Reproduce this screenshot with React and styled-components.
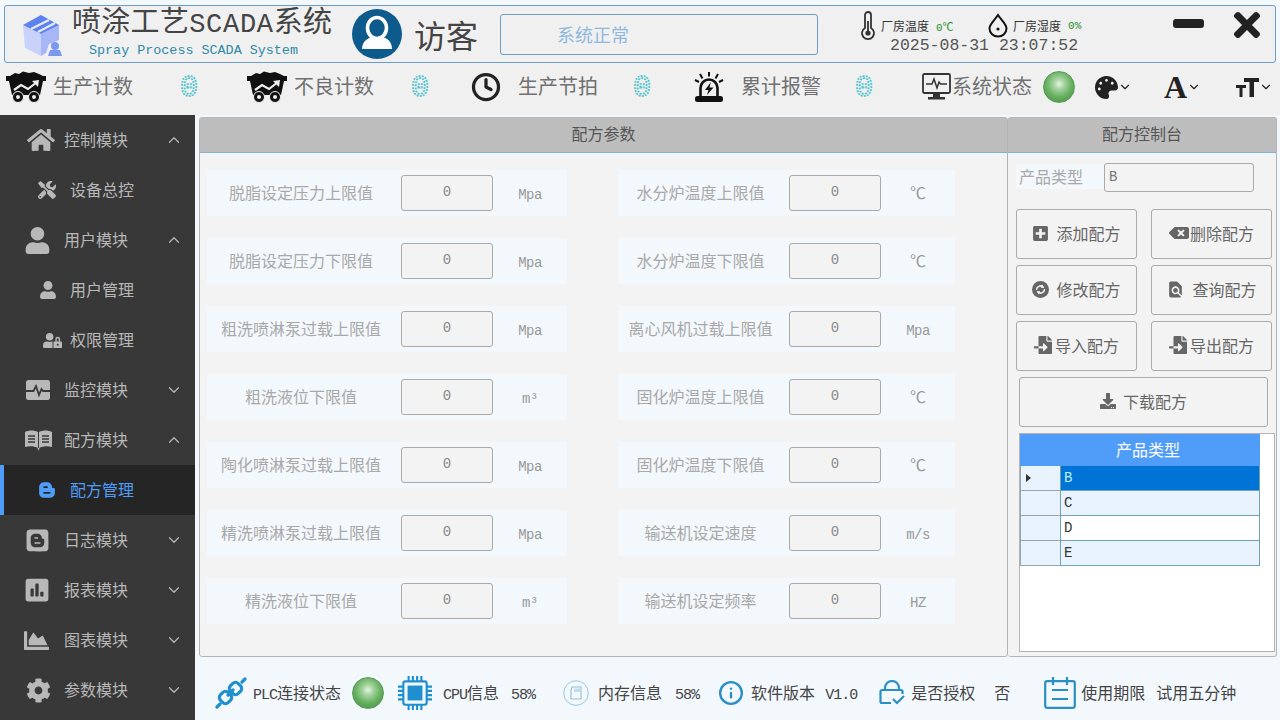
import React from 'react';
import styled, { createGlobalStyle } from 'styled-components';
import {
  FaHome, FaTools, FaUser, FaUserLock, FaBloggerB, FaBlogger, FaPoll, FaChartArea, FaCog,
  FaPalette, FaPlusSquare, FaBackspace, FaFileImport, FaDownload, FaTimes,
} from 'react-icons/fa';
import { MdFindInPage } from 'react-icons/md';
import { FiClock, FiInfo } from 'react-icons/fi';
import { ChevronDown, ChevronUp } from 'lucide-react';

const FONT = `"Liberation Mono", "Noto Sans CJK SC", monospace`;

const GlobalStyle = createGlobalStyle`
  html, body { margin: 0; padding: 0; }
  body { font-family: ${FONT}; background: #f0f0f0; overflow: hidden; }
  * { box-sizing: border-box; }
`;

const CartIcon = () => (
  <svg width="42" height="32" viewBox="0 0 42 32">
    <path d="M5 5 L10 2 L14 3 L18 0.5 L24 2 L29 1 L34 3 L38 5 Z" fill="#111" />
    <path d="M1 5 H41 V10 H38 L35 24 H7 L4 10 H1 Z" fill="#111" />
    <path d="M9 19 L16 14 L23 18 L32 11" fill="none" stroke="#f0f0f0" strokeWidth="2.2" />
    <path d="M27 10 L34 9 L33 16 Z" fill="#f0f0f0" />
    <circle cx="13" cy="26" r="5.5" fill="#111" stroke="#f0f0f0" strokeWidth="1" />
    <circle cx="29" cy="26" r="5.5" fill="#111" stroke="#f0f0f0" strokeWidth="1" />
    <circle cx="13" cy="26" r="2" fill="#f0f0f0" />
    <circle cx="29" cy="26" r="2" fill="#f0f0f0" />
  </svg>
);

const AlarmIcon = () => (
  <svg width="30" height="32" viewBox="0 0 30 32">
    <path d="M6.5 25 V17 a8.5 8.5 0 0 1 17 0 V25" fill="none" stroke="#111" strokeWidth="2.6" />
    <path d="M17 11 L11 19 H14.5 L13 24 L19.5 16.5 H15.5 Z" fill="#111" />
    <rect x="1" y="25" width="28" height="6" rx="2.5" fill="#111" />
    <path d="M15 1 V5.5 M6 3 L8.5 7.5 M24 3 L21.5 7.5 M1 9 L5 11 M29 9 L25 11" stroke="#111" strokeWidth="2" />
  </svg>
);

const MonitorIcon = () => (
  <svg width="30" height="28" viewBox="0 0 30 28">
    <rect x="1" y="1" width="27" height="19" rx="1.5" fill="none" stroke="#333" strokeWidth="1.8" />
    <path d="M4 11 H10 L12 6 L15 15 L17 9 L18.5 11 H25" fill="none" stroke="#333" strokeWidth="1.5" />
    <rect x="11" y="20" width="7" height="4" fill="#333" />
    <rect x="6" y="24" width="17" height="2.5" fill="#333" />
  </svg>
);

const LogoIcon = () => (
  <svg width="46" height="46" viewBox="0 0 46 46">
    <path d="M4 13 L22 22 V44 L6 36 Z" fill="#c9d2fb" />
    <path d="M22 22 L40 13 V28 L30 32 L27 41 L22 44 Z" fill="#a7b6f7" />
    <path d="M4 13 L22 3 L40 13 L22 22 Z" fill="#5f83ee" />
    <path d="M12 17 L30 8 M19 20 L36 11" stroke="#e8ecfd" strokeWidth="2" />
    <circle cx="36" cy="34" r="4" fill="#7b98ee" />
    <path d="M29 44 L31 38 H41 L43 44 Z" fill="#7b98ee" />
  </svg>
);

const AvatarIcon = () => (
  <svg width="50" height="50" viewBox="0 0 50 50">
    <circle cx="25" cy="25" r="25" fill="#0d5a8c" />
    <ellipse cx="25" cy="19" rx="9.5" ry="10.5" fill="none" stroke="#fff" strokeWidth="3.6" />
    <path d="M10 40 C10 32 16 29 20 28 C23 31 27 31 30 28 C35 29 40 32 40 40 Z" fill="#fff" />
  </svg>
);

const ThermoIcon = () => (
  <svg width="16" height="30" viewBox="0 0 16 30">
    <path d="M5 4 a3 3 0 0 1 6 0 V17 a6 6 0 1 1 -6 0 Z" fill="none" stroke="#333" strokeWidth="1.8" />
    <path d="M8 10 V21" stroke="#333" strokeWidth="1.8" />
    <circle cx="8" cy="22" r="2.6" fill="#333" />
  </svg>
);

const DropIcon = () => (
  <svg width="20" height="25" viewBox="0 0 20 25">
    <path d="M10 2 C14 8 18.5 11 18.5 15.5 a8.5 8 0 0 1 -17 0 C1.5 11 6 8 10 2 Z" fill="none" stroke="#111" strokeWidth="2" />
    <circle cx="10" cy="16" r="1.6" fill="#111" />
  </svg>
);

const PlugIcon = () => (
  <svg width="32" height="32" viewBox="0 0 32 32">
    <g fill="none" stroke="#1f8fd0" strokeWidth="3.2" strokeLinecap="round">
      <rect x="15" y="6" width="11" height="11" rx="4" transform="rotate(45 20.5 11.5)" />
      <rect x="5" y="15" width="11" height="11" rx="4" transform="rotate(45 10.5 20.5)" />
      <path d="M13 18 L18 13 M2 30 L5 27 M27 5 L30 2" />
    </g>
  </svg>
);

const ChipIcon = () => (
  <svg width="34" height="34" viewBox="0 0 32 32">
    <rect x="5" y="5" width="22" height="22" rx="2" fill="none" stroke="#1f8fd0" strokeWidth="2" />
    <rect x="9" y="9" width="14" height="14" fill="#1f8fd0" />
    <path d="M10 0 V5 M14 0 V5 M18 0 V5 M22 0 V5 M10 27 V32 M14 27 V32 M18 27 V32 M22 27 V32 M0 10 H5 M0 14 H5 M0 18 H5 M0 22 H5 M27 10 H32 M27 14 H32 M27 18 H32 M27 22 H32" stroke="#1f8fd0" strokeWidth="2" />
  </svg>
);

const MemoryIcon = () => (
  <svg width="26" height="26" viewBox="0 0 26 26">
    <circle cx="13" cy="13" r="12.3" fill="none" stroke="#8fc0d8" strokeWidth="0.9" />
    <path d="M9 7 H18 V19 H8 V10 Z" fill="none" stroke="#8fc0d8" strokeWidth="1.1" />
    <path d="M12 8.5 V12 M14 8.5 V12 M16 8.5 V12" stroke="#8fc0d8" strokeWidth="1" />
  </svg>
);

const LockCheckIcon = () => (
  <svg width="26" height="26" viewBox="0 0 26 26">
    <g fill="none" stroke="#2a8fc4" strokeWidth="2.2">
      <path d="M6 10 V8 a7 7 0 0 1 14 0 V10" />
      <path d="M12 23 H3 a1.5 1.5 0 0 1 -1.5 -1.5 V11.5 a1.5 1.5 0 0 1 1.5 -1.5 H22 a1.5 1.5 0 0 1 1.5 1.5 V14" />
      <path d="M14 19 L18 23 L25 16" />
    </g>
  </svg>
);

const CalendarIcon = () => (
  <svg width="32" height="32" viewBox="0 0 32 32">
    <g fill="none" stroke="#2a8fc4" strokeWidth="2.2">
      <rect x="1.2" y="4.2" width="29.6" height="26.6" rx="2" />
      <path d="M9 0 V8 M23 0 V8 M8 13 H24 M8 22 H24" />
    </g>
  </svg>
);

const SyncIcon = () => (
  <svg width="17" height="17" viewBox="0 0 17 17">
    <circle cx="8.5" cy="8.5" r="8.5" fill="#666" />
    <g fill="none" stroke="#f3f3f3" strokeWidth="1.5">
      <path d="M4.5 9 a4 4 0 0 1 6.5 -3.2" />
      <path d="M12.5 8 a4 4 0 0 1 -6.5 3.2" />
    </g>
    <path d="M10 3.5 L12.5 6.8 L9 7 Z M7 13.5 L4.5 10.2 L8 10 Z" fill="#f3f3f3" />
  </svg>
);

const PulseCardIcon = () => (
  <svg width="24" height="20" viewBox="0 0 24 20">
    <rect width="24" height="20" rx="2.5" fill="currentColor" />
    <path d="M0 11 H7.5 L10 6 L13 15 L15.5 9 L17 11 H24" fill="none" stroke="#383838" strokeWidth="1.8" />
  </svg>
);

const RecipeBookIcon = () => (
  <svg width="27" height="21" viewBox="0 0 27 21">
    <path d="M0 2 C4 0 9 0 13 2 V18 C9 16 4 16 0 17 Z M14 2 C18 0 23 0 27 2 V17 C23 16 18 16 14 18 Z" fill="currentColor" />
    <path d="M12.5 18 H14.5 L13.5 21 Z" fill="currentColor" />
    <path d="M3 6 H10 M3 9 H10 M3 12 H10 M17 6 H24 M17 9 H24 M17 12 H24" stroke="#383838" strokeWidth="1.5" />
  </svg>
);

const TextSizeIcon = () => (
  <svg width="23" height="21" viewBox="0 0 23 21">
    <path d="M0 8 H10 V11 H6.5 V20 H3.5 V11 H0 Z M8 1 H23 V5 H18 V20 H13.5 V5 H8 Z" fill="#222" />
  </svg>
);

const DotDigit = () => (
  <svg width="22" height="36" viewBox="0 0 22 36">
    <text
      x="11"
      y="27"
      textAnchor="middle"
      fontSize="30"
      fontFamily={FONT}
      fill="none"
      stroke="#49c3cf"
      strokeWidth="1.7"
      strokeDasharray="1.8 1.3"
    >
      0
    </text>
  </svg>
);

const Page = styled.div`
  width: 1280px;
  height: 720px;
  display: flex;
  flex-direction: column;
  background: #f0f0f0;
  color: #555;
  overflow: hidden;
`;

const Top = styled.div`
  padding: 5px 4px 0;
  background: #f3f8fd;
  height: 63px;
`;

const TitleBar = styled.header`
  height: 58px;
  display: flex;
  align-items: center;
  border: 1px solid #6d9cc4;
  border-radius: 3px;
  background: #f0f0f0;
`;

const LogoSlot = styled.div`
  width: 67px;
  padding: 2px 0 0 14px;
  display: flex;
`;

const TitleBlock = styled.div`
  width: 280px;
  display: flex;
  flex-direction: column;
`;

const AppName = styled.div`
  font-size: 29px;
  line-height: 34px;
  color: #444;
  letter-spacing: 0.3px;
  margin-top: -1px;
  white-space: nowrap;
  & > span { font-size: 27px; letter-spacing: 0.7px; }
`;

const AppSub = styled.div`
  font-size: 13.4px;
  line-height: 18px;
  color: #2d8aa6;
  padding-left: 17px;
  white-space: nowrap;
`;

const Visitor = styled.div`
  font-size: 32px;
  color: #444;
  margin-left: 12px;
  width: 86px;
`;

const StatusBox = styled.div`
  width: 318px;
  height: 41px;
  border: 1px solid #6d9cc4;
  border-radius: 3px;
  margin-top: 1px;
  display: flex;
  align-items: center;
  padding: 0 0 2px 56px;
  font-size: 18px;
  color: #8db8de;
`;

const EnvBlock = styled.div`
  margin-left: 42px;
  display: flex;
  flex-direction: column;
  padding-top: 1px;
`;

const EnvRow = styled.div`
  display: flex;
  align-items: center;
  height: 26px;
  margin-top: -1px;
`;

const EnvLabel = styled.span`
  font-size: 12px;
  color: #333;
  margin-left: 5px;
  white-space: nowrap;
`;

const EnvValue = styled.span`
  font-size: 11px;
  color: #1d8f1d;
  margin-left: 7px;
  width: ${p => p.$w}px;
  white-space: nowrap;
`;

const Clock = styled.div`
  font-size: 16.5px;
  line-height: 20px;
  color: #555;
  padding-left: 30px;
  white-space: nowrap;
  margin-top: -3px;
`;

const WindowButtons = styled.div`
  margin-left: auto;
  display: flex;
  align-items: center;
  gap: 24px;
  padding: 0 9px 18px 0;
  height: 100%;
`;

const MinBar = styled.div`
  width: 31px;
  height: 9px;
  border-radius: 3px;
  background: #222;
  margin-bottom: 3px;
`;

const StatsBar = styled.div`
  height: 52px;
  display: flex;
  align-items: center;
  padding-bottom: 4px;
  background: #f0f0f0;
`;

const Stat = styled.div`
  width: ${p => p.$w}px;
  padding-left: ${p => p.$pl}px;
  display: flex;
  align-items: center;
  flex: none;
`;

const StatLabel = styled.span`
  font-size: 20px;
  color: #707070;
  margin: 0 0 4px ${p => p.$ml}px;
  white-space: nowrap;
`;

const Digit = styled.div`
  margin-left: ${p => p.$ml}px;
  display: flex;
`;

const Led = styled.div`
  width: ${p => p.$size}px;
  height: ${p => p.$size}px;
  margin-left: ${p => p.$ml}px;
  border-radius: 50%;
  flex: none;
  background: radial-gradient(circle at 50% 40%, #e6f3e4 0%, #a7d4a2 22%, #66b060 55%, #3e8f3c 100%);
  border: 1px solid #5b9a58;
`;

const ToolGroup = styled.div`
  margin-left: ${p => p.$ml}px;
  display: flex;
  align-items: center;
  color: #222;
`;

const SerifA = styled.span`
  font-family: "Liberation Serif", serif;
  font-weight: 700;
  font-size: 32px;
  line-height: 32px;
  color: #222;
`;

const Main = styled.div`
  flex: 1;
  display: flex;
  min-height: 0;
`;

const Sidebar = styled.nav`
  width: 195px;
  background: #383838;
  flex: none;
`;

const NavRow = styled.div`
  height: 50px;
  display: flex;
  align-items: center;
  position: relative;
  color: ${p => (p.$active ? '#4f9df8' : '#b8b8b8')};
  background: ${p => (p.$active ? '#252525' : 'transparent')};
  border-left: ${p => (p.$active ? '4px solid #4f9df8' : '0 solid transparent')};
  padding-left: ${p => (p.$active ? 0 : 4)}px;
`;

const NavIcon = styled.div`
  width: ${p => (p.$sub ? 66 : 60)}px;
  display: flex;
  justify-content: center;
  padding-left: ${p => (p.$sub ? 20 : 8) + (p.$dx ?? 0) * 2}px;
  flex: none;
`;

const NavText = styled.span`
  font-size: 16px;
  white-space: nowrap;
  padding-bottom: 2px;
`;

const NavChevron = styled.div`
  position: absolute;
  right: 12px;
  top: 16px;
  display: flex;
`;

const Content = styled.div`
  flex: 1;
  display: flex;
  flex-direction: column;
  background: #f3f8fd;
  min-width: 0;
`;

const Panels = styled.div`
  height: 543px;
  padding: 2px 0 0 4px;
  display: flex;
`;

const Panel = styled.section`
  width: ${p => p.$w}px;
  height: 540px;
  border: 1px solid #b4b4b4;
  border-left-width: ${p => (p.$noLeft ? 0 : 1)}px;
  border-radius: 3px;
  background: #f3f3f3;
  display: flex;
  flex-direction: column;
`;

const PanelHead = styled.div`
  height: 35px;
  flex: none;
  background: #bdbdbd;
  border-bottom: 1px solid #7fb3d3;
  color: #555;
  font-size: 16px;
  display: flex;
  align-items: center;
  justify-content: center;
  padding-bottom: 4px;
`;

const FormGrid = styled.div`
  display: grid;
  grid-template-columns: 360px 337px;
  column-gap: 51px;
  row-gap: 22px;
  padding: 17px 0 0 7px;
`;

const FieldRow = styled.div`
  height: 46px;
  background: #f3f8fd;
  display: flex;
  align-items: center;
`;

const FieldLabel = styled.div`
  width: ${p => p.$w}px;
  text-align: center;
  font-size: 16px;
  color: #a8a8a8;
  white-space: nowrap;
  margin-right: 6px;
  padding-bottom: 2px;
`;

const FieldInput = styled.div`
  width: 92px;
  height: 36px;
  border: 1px solid #aaa;
  border-radius: 3px;
  background: #f3f3f3;
  color: #888;
  font-size: 14px;
  display: flex;
  align-items: center;
  justify-content: center;
  padding-bottom: 2px;
`;

const FieldUnit = styled.div`
  flex: 1;
  text-align: center;
  color: #999;
  font-size: ${p => (p.$symbol ? 16 : 14)}px;
  letter-spacing: ${p => (p.$symbol ? 0 : -0.5)}px;
  padding-top: ${p => (p.$symbol ? 0 : 3)}px;
  padding-bottom: ${p => (p.$symbol ? 2 : 0)}px;
`;

const Console = styled.div`
  padding: 9px 4px 0 8px;
  display: flex;
  flex-direction: column;
  flex: 1;
  min-height: 0;
`;

const TypeRow = styled.div`
  display: flex;
  align-items: center;
  height: 30px;
  margin-bottom: 17px;
`;

const TypeLabel = styled.div`
  width: 88px;
  height: 24px;
  padding: 0 0 2px 3px;
  background: #f3f8fd;
  color: #a8a8a8;
  font-size: 16px;
  display: flex;
  align-items: center;
  white-space: nowrap;
`;

const TypeInput = styled.div`
  width: 150px;
  height: 29px;
  border: 1px solid #aaa;
  border-radius: 3px;
  padding-left: 4px;
  font-size: 14px;
  color: #777;
  display: flex;
  align-items: center;
`;

const ButtonGrid = styled.div`
  display: grid;
  grid-template-columns: 121px 121px;
  column-gap: 14px;
  row-gap: 6px;
`;

const ActionButton = styled.button`
  height: 50px;
  width: ${p => (p.$wide ? '249px' : '100%')};
  margin-left: ${p => (p.$wide ? '3px' : '0')};
  margin-top: ${p => (p.$wide ? '6px' : '0')};
  border: 1px solid #aaa;
  border-radius: 3px;
  background: #f3f3f3;
  color: #666;
  font-family: ${FONT};
  font-size: 16px;
  display: flex;
  align-items: center;
  justify-content: center;
  gap: ${p => p.$gap ?? 7}px;
  padding: 0 0 2px;
`;

const GridBox = styled.div`
  margin: 6px 0 0 3px;
  height: 219px;
  width: 256px;
  background: #fff;
  border: 1px solid #b4b4b4;
`;

const GridHead = styled.div`
  width: 240px;
  height: 32px;
  background: #4f9df8;
  color: #fff;
  font-size: 16px;
  display: flex;
  align-items: center;
  justify-content: center;
  padding: 0 0 2px 16px;
`;

const GridRow = styled.div`
  width: 240px;
  height: 25px;
  display: flex;
`;

const RowMark = styled.div`
  width: 40px;
  background: #e9f3fd;
  border-left: 1px solid #8fa6b0;
  border-bottom: 1px solid #9aa5ab;
  display: flex;
  align-items: center;
  padding-left: 5px;
`;

const RowCell = styled.div`
  flex: 1;
  padding-left: 3px;
  font-size: 14px;
  display: flex;
  align-items: center;
  color: ${p => (p.$selected ? '#bff3ff' : '#333')};
  background: ${p => (p.$selected ? '#0074d6' : p.$odd ? '#e9f3fd' : '#fff')};
  border-bottom: 1px solid #6fa3b3;
  border-right: 1px solid #6fa3b3;
  border-left: 1px solid #6fa3b3;
`;

const Arrow = styled.div`
  width: 0;
  height: 0;
  border-left: 5px solid #333;
  border-top: 4.5px solid transparent;
  border-bottom: 4.5px solid transparent;
`;

const Footer = styled.footer`
  flex: 1;
  display: flex;
  align-items: center;
  font-size: 16px;
  color: #444;
  padding: 8px 0 0 20px;
  white-space: nowrap;
`;

const FooterItem = styled.div`
  display: flex;
  align-items: center;
  margin-left: ${p => p.$ml ?? 0}px;
  gap: ${p => p.$gap ?? 0}px;
`;

const FooterText = styled.span`
  padding-bottom: 2px;
`;

const Latin = styled.span`
  font-size: 15px;
  letter-spacing: -1px;
`;

const FooterValue = styled.span`
  font-size: ${p => (p.$latin ? 15 : 16)}px;
  letter-spacing: ${p => (p.$latin ? -1 : 0)}px;
  margin-left: ${p => p.$ml}px;
`;

const fields = [
  ['脱脂设定压力上限值', 'Mpa', '水分炉温度上限值', '℃'],
  ['脱脂设定压力下限值', 'Mpa', '水分炉温度下限值', '℃'],
  ['粗洗喷淋泵过载上限值', 'Mpa', '离心风机过载上限值', 'Mpa'],
  ['粗洗液位下限值', 'm³', '固化炉温度上限值', '℃'],
  ['陶化喷淋泵过载上限值', 'Mpa', '固化炉温度下限值', '℃'],
  ['精洗喷淋泵过载上限值', 'Mpa', '输送机设定速度', 'm/s'],
  ['精洗液位下限值', 'm³', '输送机设定频率', 'HZ'],
];

const navItems = [
  { text: '控制模块', icon: <FaHome size={28} />, open: true, dx: 3 },
  { text: '设备总控', icon: <FaTools size={18} />, sub: true },
  { text: '用户模块', icon: <FaUser size={27} />, open: true, dx: -1 },
  { text: '用户管理', icon: <FaUser size={18} />, sub: true, dx: 1 },
  { text: '权限管理', icon: <FaUserLock size={19} />, sub: true, dx: 5 },
  { text: '监控模块', icon: <PulseCardIcon />, open: false },
  { text: '配方模块', icon: <RecipeBookIcon />, open: true },
  { text: '配方管理', icon: <FaBloggerB size={18} />, sub: true, active: true },
  { text: '日志模块', icon: <FaBlogger size={25} />, open: false, dx: -1 },
  { text: '报表模块', icon: <FaPoll size={26} />, open: false, dx: -1 },
  { text: '图表模块', icon: <FaChartArea size={25} />, open: false, dx: -2 },
  { text: '参数模块', icon: <FaCog size={25} />, open: false },
];

const rows = ['B', 'C', 'D', 'E'];

export default function App() {
  return (
    <Page>
      <GlobalStyle />
      <Top>
        <TitleBar>
          <LogoSlot><LogoIcon /></LogoSlot>
          <TitleBlock>
            <AppName>喷涂工艺<span>SCADA</span>系统</AppName>
            <AppSub>Spray Process SCADA System</AppSub>
          </TitleBlock>
          <AvatarIcon />
          <Visitor>访客</Visitor>
          <StatusBox>系统正常</StatusBox>
          <EnvBlock>
            <EnvRow>
              <ThermoIcon />
              <EnvLabel>厂房温度</EnvLabel>
              <EnvValue $w={52}>0℃</EnvValue>
              <DropIcon />
              <EnvLabel>厂房湿度</EnvLabel>
              <EnvValue $w={20}>0%</EnvValue>
            </EnvRow>
            <Clock>2025-08-31 23:07:52</Clock>
          </EnvBlock>
          <WindowButtons>
            <MinBar />
            <FaTimes size={38} color="#222" />
          </WindowButtons>
        </TitleBar>
      </Top>
      <StatsBar>
        <Stat $w={241} $pl={5}>
          <CartIcon /><StatLabel $ml={6}>生产计数</StatLabel><Digit $ml={45}><DotDigit /></Digit>
        </Stat>
        <Stat $w={224} $pl={5}>
          <CartIcon /><StatLabel $ml={6}>不良计数</StatLabel><Digit $ml={35}><DotDigit /></Digit>
        </Stat>
        <Stat $w={228} $pl={6}>
          <FiClock size={30} color="#222" strokeWidth={2.6} /><StatLabel $ml={17}>生产节拍</StatLabel><Digit $ml={33}><DotDigit /></Digit>
        </Stat>
        <Stat $w={229} $pl={1}>
          <AlarmIcon /><StatLabel $ml={17}>累计报警</StatLabel><Digit $ml={32}><DotDigit /></Digit>
        </Stat>
        <MonitorIcon />
        <StatLabel $ml={0}>系统状态</StatLabel>
        <Led $size={32} $ml={11} />
        <ToolGroup $ml={20}><FaPalette size={23} /><ChevronDown size={14} /></ToolGroup>
        <ToolGroup $ml={32}><SerifA>A</SerifA><ChevronDown size={14} /></ToolGroup>
        <ToolGroup $ml={35}><TextSizeIcon /><ChevronDown size={14} /></ToolGroup>
      </StatsBar>
      <Main>
        <Sidebar>
          {navItems.map(item => (
            <NavRow key={item.text} $active={item.active}>
              <NavIcon $sub={item.sub} $dx={item.dx}>{item.icon}</NavIcon>
              <NavText>{item.text}</NavText>
              {!item.sub && (
                <NavChevron>
                  {item.open ? <ChevronUp size={18} strokeWidth={1.6} /> : <ChevronDown size={18} strokeWidth={1.6} />}
                </NavChevron>
              )}
            </NavRow>
          ))}
        </Sidebar>
        <Content>
          <Panels>
            <Panel $w={809}>
              <PanelHead>配方参数</PanelHead>
              <FormGrid>
                {fields.map(([a, ua, b, ub]) => (
                  <React.Fragment key={a}>
                    <FieldRow>
                      <FieldLabel $w={188}>{a}</FieldLabel>
                      <FieldInput>0</FieldInput>
                      <FieldUnit>{ua}</FieldUnit>
                    </FieldRow>
                    <FieldRow>
                      <FieldLabel $w={165}>{b}</FieldLabel>
                      <FieldInput>0</FieldInput>
                      <FieldUnit $symbol={ub === '℃'}>{ub}</FieldUnit>
                    </FieldRow>
                  </React.Fragment>
                ))}
              </FormGrid>
            </Panel>
            <Panel $w={269} $noLeft>
              <PanelHead>配方控制台</PanelHead>
              <Console>
                <TypeRow>
                  <TypeLabel>产品类型</TypeLabel>
                  <TypeInput>B</TypeInput>
                </TypeRow>
                <ButtonGrid>
                  <ActionButton><FaPlusSquare size={17} color="#666" />添加配方</ActionButton>
                  <ActionButton $gap={1}><FaBackspace size={20} color="#666" />删除配方</ActionButton>
                  <ActionButton><SyncIcon />修改配方</ActionButton>
                  <ActionButton><MdFindInPage size={19} color="#666" />查询配方</ActionButton>
                  <ActionButton $gap={3}><FaFileImport size={18} color="#666" />导入配方</ActionButton>
                  <ActionButton $gap={3}><FaFileImport size={18} color="#666" />导出配方</ActionButton>
                </ButtonGrid>
                <ActionButton $wide><FaDownload size={16} color="#666" />下载配方</ActionButton>
                <GridBox>
                  <GridHead>产品类型</GridHead>
                  {rows.map((r, i) => (
                    <GridRow key={r}>
                      <RowMark>{i === 0 && <Arrow />}</RowMark>
                      <RowCell $selected={i === 0} $odd={i % 2 === 1}>{r}</RowCell>
                    </GridRow>
                  ))}
                </GridBox>
              </Console>
            </Panel>
          </Panels>
          <Footer>
            <FooterItem $gap={6}><PlugIcon /><FooterText><Latin>PLC</Latin>连接状态</FooterText></FooterItem>
            <Led $size={32} $ml={11} />
            <FooterItem $ml={14} $gap={11}>
              <ChipIcon />
              <FooterText><Latin>CPU</Latin>信息<FooterValue $latin $ml={12}>58%</FooterValue></FooterText>
            </FooterItem>
            <FooterItem $ml={28} $gap={9}>
              <MemoryIcon />
              <FooterText>内存信息<FooterValue $latin $ml={13}>58%</FooterValue></FooterText>
            </FooterItem>
            <FooterItem $ml={19} $gap={7}>
              <FiInfo size={26} color="#2a8fc4" strokeWidth={2.2} />
              <FooterText>软件版本<FooterValue $latin $ml={10}>V1.0</FooterValue></FooterText>
            </FooterItem>
            <FooterItem $ml={22} $gap={6}>
              <LockCheckIcon />
              <FooterText>是否授权<FooterValue $ml={19}>否</FooterValue></FooterText>
            </FooterItem>
            <FooterItem $ml={34} $gap={5}>
              <CalendarIcon />
              <FooterText>使用期限<FooterValue $ml={11}>试用五分钟</FooterValue></FooterText>
            </FooterItem>
          </Footer>
        </Content>
      </Main>
    </Page>
  );
}
